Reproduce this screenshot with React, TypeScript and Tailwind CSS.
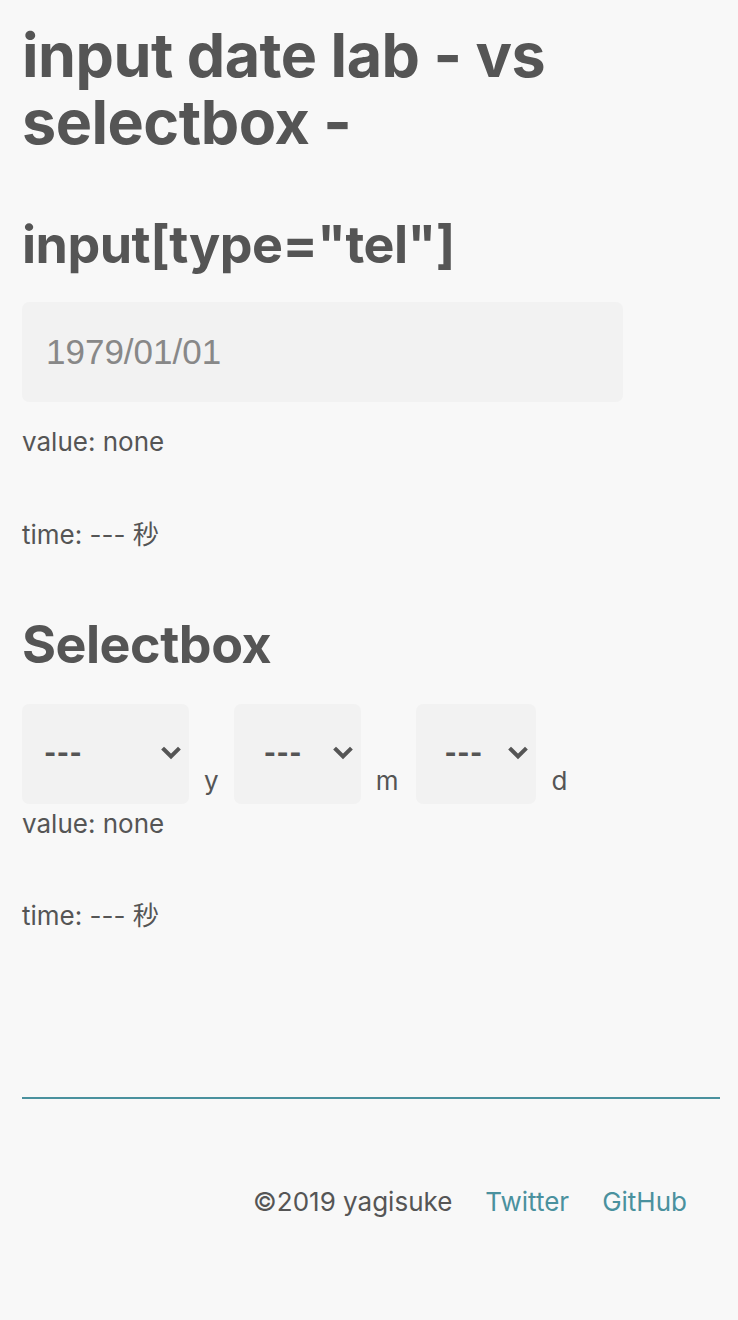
import React from 'react';

function Chevron() {
  return (
    <svg width="20" height="14" viewBox="0 0 20 14" className="shrink-0">
      <path d="M3 3.5 L10 10.5 L17 3.5" fill="none" stroke="#555" strokeWidth="4" strokeLinecap="square" />
    </svg>
  );
}

function Select({ width, padLeft }: { width: string; padLeft: string }) {
  return (
    <div className={`${width} ${padLeft} h-[100px] rounded-[7px] bg-[#f2f2f2] flex items-center justify-between pr-[8px] pb-[2px]`}>
      <span className="text-[26px] font-extrabold leading-none tracking-[0.5px]">---</span>
      <Chevron />
    </div>
  );
}

export default function App() {
  return (
    <div className="min-h-[1320px] bg-[#f8f8f8] text-[#555] font-['Inter','Noto_Sans_CJK_JP',sans-serif] px-[22px]">
      <h1 className="pt-[22px] text-[61px] leading-[67px] font-bold tracking-[-0.5px]">input date lab - vs selectbox -</h1>

      <h2 className="mt-[60px] text-[52px] leading-[58px] font-bold tracking-[-0.5px]">input[type="tel"]</h2>
      <div className="mt-[28px] w-[601px] h-[100px] rounded-[7px] bg-[#f2f2f2] flex items-center pl-[24px]">
        <span className="font-['Liberation_Sans',sans-serif] text-[35px] text-[#888]">1979/01/01</span>
      </div>
      <p className="mt-[22px] text-[26px] leading-[36px]">value: none</p>
      <p className="mt-[57px] text-[26px] leading-[36px]">time: --- 秒</p>

      <h2 className="mt-[63px] text-[52px] leading-[58px] font-bold tracking-[-0.5px]">Selectbox</h2>
      <div className="mt-[30px] flex items-end">
        <Select width="w-[167px]" padLeft="pl-[22px]" />
        <span className="mx-[15px] mb-[5px] text-[26px] leading-[36px]">y</span>
        <Select width="w-[127px]" padLeft="pl-[30px]" />
        <span className="ml-[15px] mr-[18px] mb-[5px] text-[26px] leading-[36px]">m</span>
        <Select width="w-[120px]" padLeft="pl-[28px]" />
        <span className="mx-[15px] mb-[5px] text-[26px] leading-[36px]">d</span>
      </div>
      <p className="mt-[2px] text-[26px] leading-[36px]">value: none</p>
      <p className="mt-[56px] text-[26px] leading-[36px]">time: --- 秒</p>

      <div className="mt-[163px] h-[2px] w-[698px] bg-[#4a919e]" />
      <footer className="mt-[86px] flex justify-end gap-[33px] pr-[29px] text-[26px] leading-[34px]">
        <span>©2019 yagisuke</span>
        <a className="text-[#4a919e]">Twitter</a>
        <a className="text-[#4a919e]">GitHub</a>
      </footer>
    </div>
  );
}
